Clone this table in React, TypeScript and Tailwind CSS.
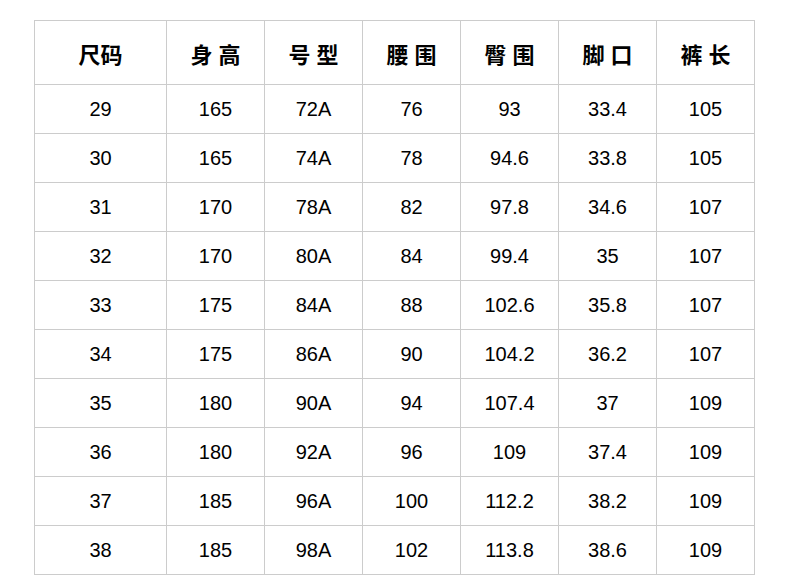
const headers = ["尺码", "身 高", "号 型", "腰 围", "臀 围", "脚 口", "裤 长"];

const rows = [
  ["29", "165", "72A", "76", "93", "33.4", "105"],
  ["30", "165", "74A", "78", "94.6", "33.8", "105"],
  ["31", "170", "78A", "82", "97.8", "34.6", "107"],
  ["32", "170", "80A", "84", "99.4", "35", "107"],
  ["33", "175", "84A", "88", "102.6", "35.8", "107"],
  ["34", "175", "86A", "90", "104.2", "36.2", "107"],
  ["35", "180", "90A", "94", "107.4", "37", "109"],
  ["36", "180", "92A", "96", "109", "37.4", "109"],
  ["37", "185", "96A", "100", "112.2", "38.2", "109"],
  ["38", "185", "98A", "102", "113.8", "38.6", "109"],
];

export default function App() {
  return (
    <div
      className="min-h-[575px] w-[790px] bg-white pl-[34px] pt-[20px] text-black"
      style={{ fontFamily: "'Liberation Sans', 'Noto Sans CJK SC', sans-serif" }}
    >
      <table className="table-fixed border-collapse">
        <colgroup>
          <col className="w-[132px]" />
          {[0, 1, 2, 3, 4, 5].map((i) => (
            <col key={i} className="w-[98px]" />
          ))}
        </colgroup>
        <thead>
          <tr className="h-[64px]">
            {headers.map((h) => (
              <th key={h} className="border border-[#cccccc] p-0 pt-[5px] text-center text-[22px] font-bold">
                {h}
              </th>
            ))}
          </tr>
        </thead>
        <tbody>
          {rows.map((row) => (
            <tr key={row[0]} className="h-[49px]">
              {row.map((cell, i) => (
                <td key={i} className="border border-[#cccccc] p-0 text-center text-[20px]">
                  {cell}
                </td>
              ))}
            </tr>
          ))}
        </tbody>
      </table>
    </div>
  );
}
